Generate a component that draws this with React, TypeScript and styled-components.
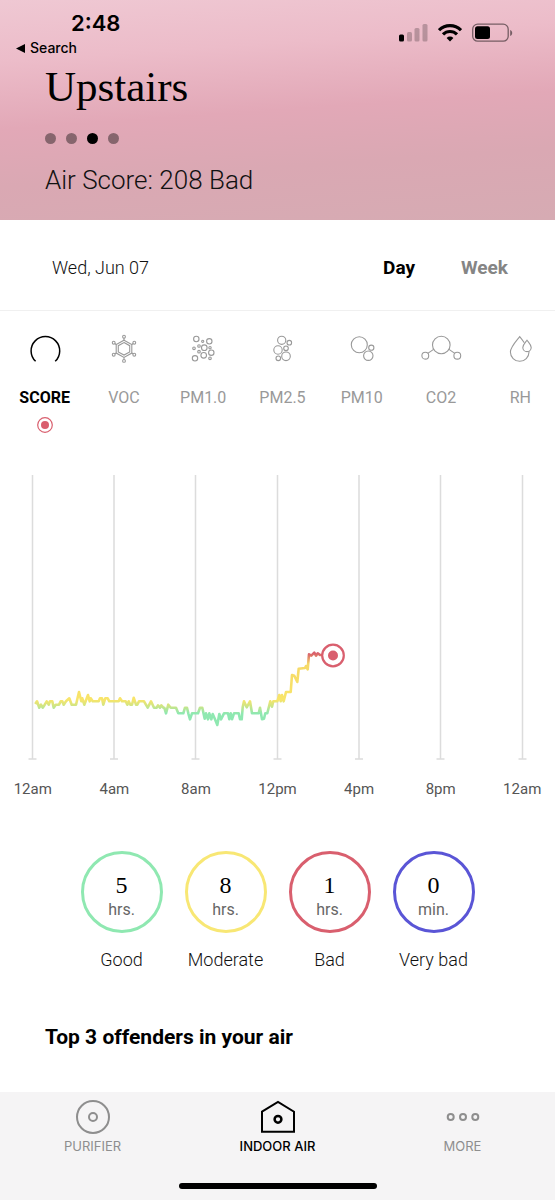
import React from "react";
import styled, { createGlobalStyle } from "styled-components";

const GlobalStyle = createGlobalStyle`
  *, *::before, *::after { box-sizing: border-box; }
  body { margin: 0; background: #fff; }
  button { font: inherit; color: inherit; background: none; border: 0; padding: 0; cursor: pointer; }
  h1, h2, p, ul { margin: 0; padding: 0; }
  svg { display: block; }
`;

const ui = `Roboto, "Liberation Sans", sans-serif`;
const system = `Inter, "Liberation Sans", sans-serif`;
const serif = `"Liberation Serif", serif`;

const Page = styled.div`
  min-height: 100vh;
  display: flex;
  flex-direction: column;
  overflow: hidden;
  font-family: ${ui};
  color: #111;
`;

const Header = styled.header`
  padding: 8px 42px 24px 45px;
  background: linear-gradient(176deg, #efc8d3 0%, #ecbcc9 24%, #e2a8b7 50%, #daa8b3 72%, #d6abb3 100%);
`;

const StatusBar = styled.div`
  display: flex;
  justify-content: space-between;
  height: 30px;
  font-family: ${system};
`;

const Clock = styled.time`
  padding-left: 26px;
  font-size: 22px;
  font-weight: 600;
  line-height: 30px;
  color: #000;
`;

const StatusIcons = styled.div`
  display: flex;
  gap: 10px;
  padding-top: 15px;
`;

const BackLink = styled.a`
  display: flex;
  align-items: center;
  gap: 5px;
  width: max-content;
  margin-left: -29px;
  font-family: ${system};
  font-size: 14px;
  font-weight: 500;
  line-height: 20px;
  color: #000;
  text-decoration: none;
`;

const Title = styled.h1`
  margin-top: 5px;
  font-family: ${serif};
  font-size: 43px;
  font-weight: 400;
  line-height: 48px;
  color: #000;
`;

const Dots = styled.div`
  display: flex;
  gap: 10px;
  margin-top: 22px;
`;

const Dot = styled.button<{ $active?: boolean }>`
  width: 11px;
  height: 11px;
  border-radius: 50%;
  background: ${(p) => (p.$active ? "#000" : "rgba(0, 0, 0, 0.4)")};
`;

const Score = styled.p`
  margin-top: 20px;
  font-size: 26px;
  font-weight: 300;
  line-height: 32px;
`;

const RangeBar = styled.div`
  display: flex;
  align-items: center;
  justify-content: space-between;
  padding: 34px 47px 28px 52px;
  border-bottom: 1px solid #f0f0f0;
  font-size: 18px;
  line-height: 28px;
`;

const DateLabel = styled.span`
  font-weight: 300;
`;

const RangeTabs = styled.div`
  display: flex;
  gap: 46px;
`;

const RangeTab = styled.button<{ $active?: boolean }>`
  font-size: 19px;
  font-weight: 700;
  color: ${(p) => (p.$active ? "#000" : "#858585")};
`;

const Metrics = styled.div`
  display: flex;
  margin: 23px -5px 0 5px;
`;

const Metric = styled.button<{ $active?: boolean }>`
  flex: 1 1 0;
  min-width: 0;
  display: flex;
  flex-direction: column;
  align-items: center;
  font-size: 16px;
  font-weight: ${(p) => (p.$active ? 700 : 400)};
  line-height: 20px;
  color: ${(p) => (p.$active ? "#000" : "#999")};
`;

const MetricName = styled.span`
  margin: 22px 0 9px;
`;

const Chart = styled.svg`
  width: 100%;
  height: auto;
  margin-top: 37px;
`;

const Hours = styled.div`
  display: grid;
  grid-template-columns: repeat(7, 1fr);
  margin: 9px -8px 0;
  font-size: 15px;
  line-height: 20px;
  text-align: center;
  color: #555;
`;

const Ratings = styled.ul`
  display: flex;
  justify-content: center;
  margin-top: 52px;
  list-style: none;
`;

const Rating = styled.li`
  width: 104px;
  display: flex;
  flex-direction: column;
  align-items: center;
`;

const Ring = styled.div<{ $color: string }>`
  width: 82px;
  height: 82px;
  display: flex;
  flex-direction: column;
  align-items: center;
  padding-top: 18px;
  border: 3px solid ${(p) => p.$color};
  border-radius: 50%;
`;

const Amount = styled.span`
  font-family: ${serif};
  font-size: 24px;
  line-height: 26px;
  color: #000;
`;

const Unit = styled.span`
  font-size: 16px;
  line-height: 24px;
  color: #666;
`;

const RatingName = styled.span`
  margin-top: 15px;
  font-size: 18px;
  font-weight: 300;
  line-height: 24px;
`;

const Offenders = styled.h2`
  padding: 0 45px;
  margin: 51px 0 40px;
  font-size: 21px;
  font-weight: 700;
  line-height: 28px;
  color: #000;
`;

const TabBar = styled.nav`
  margin-top: auto;
  padding: 7px 0 11px;
  background: #f5f4f5;
`;

const Tabs = styled.div`
  display: grid;
  grid-template-columns: repeat(3, 1fr);
`;

const Tab = styled.button<{ $active?: boolean }>`
  display: flex;
  flex-direction: column;
  align-items: center;
  gap: 2px;
  font-family: ${system};
  font-size: 13px;
  font-weight: ${(p) => (p.$active ? 500 : 400)};
  line-height: 18px;
  color: ${(p) => (p.$active ? "#000" : "#8e8e8e")};
`;

const HomeIndicator = styled.div`
  width: 198px;
  height: 6px;
  margin: 28px auto 0;
  border-radius: 3px;
  background: #000;
`;

type Circle = [number, number, number];

const Bubbles = ({ items }: { items: Circle[] }) => (
  <>
    {items.map(([x, y, r]) => (
      <circle key={`${x}-${y}`} cx={x} cy={y} r={r} />
    ))}
  </>
);

const metrics: { name: string; width?: number; art: React.ReactNode }[] = [
  {
    name: "SCORE",
    width: 1.5,
    art: <path d="M12.6 27.3A14.3 14.3 0 1 1 32.2 27.3" />,
  },
  {
    name: "VOC",
    art: (
      <>
        <path d="M22 6.2l7.800 4.300v8.600l-7.800 4.300-7.800-4.300v-8.600zM22 8.600l5.700 3.100v6.200L22 21l-5.700-3.100v-6.200z" />
        <path d="M22 4v2.2M22 23.400v2.200M14.2 10.500l-1.400-1M29.800 10.500l1.400-1M14.2 19.100l-1.400.8M29.800 19.100l1.400.8" />
        <Bubbles
          items={[[22, 2.7, 1.4], [22, 26.9, 1.4], [11.7, 8.7, 1.4], [32.3, 8.7, 1.4], [11.7, 20.7, 1.4], [32.3, 20.7, 1.4]]}
        />
      </>
    ),
  },
  {
    name: "PM1.0",
    art: (
      <Bubbles
        items={[
          [15.3, 5, 2.7], [28.3, 7.3, 2.7], [21.7, 7.3, 1.1], [18, 12, 1.3], [23.3, 13.7, 2.8], [29, 13.7, 1.2],
          [13, 14.3, 1.3], [18, 17.7, 1.3], [30.3, 18.7, 2.7], [22.7, 21.3, 2.8], [14, 24.3, 2.7], [29, 24.3, 1.3],
        ]}
      />
    ),
  },
  {
    name: "PM2.5",
    art: (
      <Bubbles
        items={[[21.7, 6.3, 4.1], [29.3, 8.7, 2.3], [18, 16, 4.2], [26, 14.3, 2.3], [26, 22.3, 4.3], [18.3, 24.3, 2.3]]}
      />
    ),
  },
  {
    name: "PM10",
    art: <Bubbles items={[[19.3, 10.7, 8], [31.3, 13.7, 2.6], [28.3, 21.7, 4.7]]} />,
  },
  {
    name: "CO2",
    art: (
      <>
        <path d="M14.6 15.4l-5.8 4M30 15.4l5.8 4" />
        <Bubbles items={[[22.3, 11, 8.8], [6.3, 21.7, 3.4], [38.3, 21.7, 3.4]]} />
      </>
    ),
  },
  {
    name: "RH",
    art: (
      <>
        <path d="M26.3 8.8C24.8 6.6 23.2 4.4 21.7 2.6 18 7.2 12.4 13 12.4 18a9.3 9.3 0 0 0 18.6 0c0-.4 0-.8-.1-1.2" />
        <path d="M29 6.2c-1.800 2.600-4.200 4.800-4.200 7.200a4.200 4.200 0 0 0 8.400 0c0-2.400-2.400-4.600-4.200-7.200z" />
      </>
    ),
  },
];

// Each run of readings holds [time, level] pairs in thirds of a chart unit.
const runs: { offset: number; points: [number, number][] }[] = [
  {
    offset: 60,
    points: [
      [46, 192], [51, 184], [58, 203], [63, 194], [68, 203], [74, 194], [80, 184], [86, 194], [90, 184], [97, 184],
      [101, 203], [107, 194], [117, 194], [122, 184], [127, 184], [131, 194], [138, 184], [148, 175], [155, 194],
      [168, 194], [177, 156], [184, 184], [187, 175], [193, 194], [204, 165], [209, 184], [212, 175], [218, 184],
      [236, 184], [240, 175], [246, 175], [250, 194], [256, 175], [263, 175], [268, 184], [296, 184], [300, 175],
      [306, 184], [317, 184], [322, 194], [326, 184], [331, 194], [336, 194], [341, 173], [348, 194], [352, 194],
      [357, 184], [372, 184], [383, 203], [393, 184], [402, 203], [410, 203], [414, 196], [420, 203], [424, 196],
      [430, 203], [433, 203], [438, 220], [445, 194], [452, 203], [468, 203], [475, 220], [490, 220], [495, 203],
      [501, 203], [505, 220], [510, 238], [516, 220], [532, 220],
    ],
  },
  {
    offset: 570,
    points: [
      [24, 220], [30, 203], [37, 203], [44, 236], [48, 220], [54, 238], [58, 220], [64, 238], [68, 222], [75, 238],
      [82, 255], [88, 222], [93, 238], [102, 220], [114, 220], [118, 238], [122, 220], [126, 238], [132, 220],
      [146, 220], [150, 238], [155, 238], [158, 202], [162, 184], [170, 202], [180, 184], [186, 220], [206, 220],
      [210, 203], [216, 238], [222, 236], [226, 220], [232, 220], [241, 184], [246, 200], [250, 184], [262, 184],
      [268, 165], [272, 184], [276, 165], [281, 184], [288, 156], [302, 156], [306, 105], [313, 107], [322, 126],
      [326, 86], [345, 84], [348, 78], [353, 88], [357, 43], [364, 47], [373, 38], [378, 47], [383, 40], [390, 45],
      [400, 45],
    ],
  },
];

const trace = runs
  .flatMap((run) => run.points.map(([t, v]) => `${((t + run.offset) / 3).toFixed(1)},${(170 + v / 3).toFixed(1)}`))
  .join(" ");

const hours = ["12am", "4am", "8am", "12pm", "4pm", "8pm", "12am"];
const gridLines = [32.5, 114, 195.5, 277.5, 359, 440.5, 522.5];

const ratings = [
  { amount: 5, unit: "hrs.", name: "Good", color: "#8fe8b1" },
  { amount: 8, unit: "hrs.", name: "Moderate", color: "#f8e774" },
  { amount: 1, unit: "hrs.", name: "Bad", color: "#d95f6e" },
  { amount: 0, unit: "min.", name: "Very bad", color: "#5a55d6" },
];

export default function App() {
  return (
    <Page>
      <GlobalStyle />
      <Header>
        <StatusBar>
          <Clock>2:48</Clock>
          <StatusIcons>
            <svg width="29" height="20" viewBox="0 0 29 20">
              <rect x="0" y="11.500" width="5" height="7" rx="1.500" fill="#000" />
              <g fill="#000" opacity=".22">
                <rect x="8" y="9" width="5" height="9.500" rx="1.500" />
                <rect x="15.500" y="5" width="5" height="13.500" rx="1.500" />
                <rect x="23.500" y="1" width="5" height="17.500" rx="1.500" />
              </g>
            </svg>
            <svg width="24" height="20" viewBox="0 0 24 20" fill="none" stroke="#000" strokeWidth="3.200">
              <path d="M1 7.200a15.600 15.600 0 0 1 22 0" />
              <path d="M5 11.400a9.900 9.900 0 0 1 14 0" />
              <path d="M12 18.500l-3.400-3.600a4.900 4.900 0 0 1 6.800 0z" fill="#000" stroke="none" />
            </svg>
            <svg width="41" height="20" viewBox="0 0 41 20">
              <rect x=".7" y="1.200" width="35.500" height="17" rx="5" fill="none" stroke="#000" strokeWidth="1.300" opacity=".5" />
              <rect x="3" y="3.300" width="15" height="12.800" rx="2.500" fill="#000" />
              <path d="M38.200 7v6c1.300-.5 2-1.600 2-3s-.7-2.500-2-3z" fill="#000" opacity=".5" />
            </svg>
          </StatusIcons>
        </StatusBar>
        <BackLink href="#search">
          <svg width="9" height="9" viewBox="0 0 9 9">
            <path d="M0 4.500L9 0v9z" />
          </svg>
          Search
        </BackLink>
        <Title>Upstairs</Title>
        <Dots>
          {["Room 1", "Room 2", "Room 3", "Room 4"].map((room, i) => (
            <Dot key={room} aria-label={room} $active={i === 2} />
          ))}
        </Dots>
        <Score>Air Score: 208 Bad</Score>
      </Header>

      <RangeBar>
        <DateLabel>Wed, Jun 07</DateLabel>
        <RangeTabs>
          <RangeTab $active>Day</RangeTab>
          <RangeTab>Week</RangeTab>
        </RangeTabs>
      </RangeBar>

      <Metrics>
        {metrics.map((m, i) => (
          <Metric key={m.name} $active={i === 0}>
            <svg width="44" height="32" viewBox="0 0 44 32" fill="none" stroke="currentColor" strokeWidth={m.width ?? 1.1}>
              {m.art}
            </svg>
            <MetricName>{m.name}</MetricName>
            {i === 0 && (
              <svg width="16" height="16" viewBox="0 0 16 16">
                <circle cx="8" cy="8" r="7.300" fill="none" stroke="#d95f6e" strokeWidth="1.200" />
                <circle cx="8" cy="8" r="4" fill="#d95f6e" />
              </svg>
            )}
          </Metric>
        ))}
      </Metrics>

      <Chart viewBox="0 0 555 300" role="img" aria-label="Air score through the day">
        <defs>
          <linearGradient id="level" gradientUnits="userSpaceOnUse" x1="0" y1="183" x2="0" y2="250">
            <stop offset="0" stopColor="#d95f6e" />
            <stop offset=".04" stopColor="#dd7468" />
            <stop offset=".16" stopColor="#f6d968" />
            <stop offset=".7" stopColor="#f8e56a" />
            <stop offset=".79" stopColor="#cfe585" />
            <stop offset=".9" stopColor="#8fe8b1" />
          </linearGradient>
        </defs>
        <g stroke="#dcdcdc" strokeWidth="1.500">
          {gridLines.map((x) => (
            <path key={x} d={`M${x} 5V289M${x - 4} 289h8`} />
          ))}
        </g>
        <polyline points={trace} fill="none" stroke="url(#level)" strokeWidth="2.600" strokeLinejoin="round" />
        <circle cx="333" cy="185.500" r="10.800" fill="#fff" stroke="#d95f6e" strokeWidth="2.200" />
        <circle cx="333" cy="185.500" r="5" fill="#d95f6e" />
      </Chart>
      <Hours>
        {hours.map((h, i) => (
          <span key={i}>{h}</span>
        ))}
      </Hours>

      <Ratings>
        {ratings.map((r) => (
          <Rating key={r.name}>
            <Ring $color={r.color}>
              <Amount>{r.amount}</Amount>
              <Unit>{r.unit}</Unit>
            </Ring>
            <RatingName>{r.name}</RatingName>
          </Rating>
        ))}
      </Ratings>

      <Offenders>Top 3 offenders in your air</Offenders>

      <TabBar>
        <Tabs>
          <Tab>
            <svg width="36" height="36" viewBox="0 0 36 36" fill="none" stroke="currentColor" strokeWidth="2">
              <circle cx="18" cy="18" r="16" />
              <circle cx="18" cy="18" r="4" />
            </svg>
            PURIFIER
          </Tab>
          <Tab $active>
            <svg width="36" height="36" viewBox="0 0 36 36" fill="none" stroke="currentColor" strokeWidth="2">
              <path d="M2 12.700L18 3l16 9.700v20H2z" />
              <circle cx="18" cy="20.300" r="3.400" strokeWidth="2.500" />
            </svg>
            INDOOR AIR
          </Tab>
          <Tab>
            <svg width="36" height="36" viewBox="0 0 36 36" fill="none" stroke="currentColor" strokeWidth="2">
              <circle cx="5.700" cy="18" r="3" />
              <circle cx="18" cy="18" r="3" />
              <circle cx="30.300" cy="18" r="3" />
            </svg>
            MORE
          </Tab>
        </Tabs>
        <HomeIndicator />
      </TabBar>
    </Page>
  );
}
